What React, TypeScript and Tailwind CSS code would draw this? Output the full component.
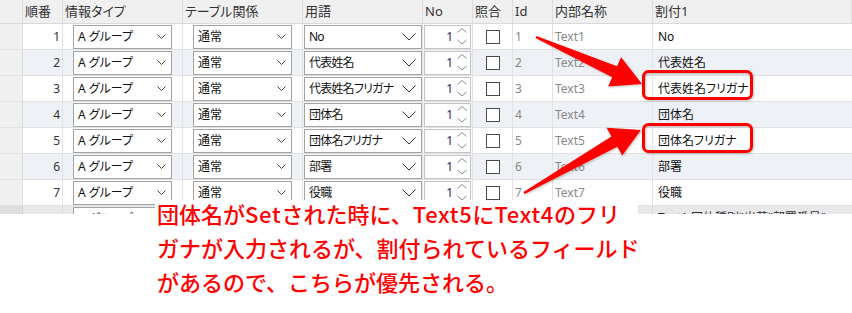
import React from "react";

type Row = { n: number; term: string; id: number; name: string; map: string };

const rows: Row[] = [
  { n: 1, term: "No", id: 1, name: "Text1", map: "No" },
  { n: 2, term: "代表姓名", id: 2, name: "Text2", map: "代表姓名" },
  { n: 3, term: "代表姓名フリガナ", id: 3, name: "Text3", map: "代表姓名フリガナ" },
  { n: 4, term: "団体名", id: 4, name: "Text4", map: "団体名" },
  { n: 5, term: "団体名フリガナ", id: 5, name: "Text5", map: "団体名フリガナ" },
  { n: 6, term: "部署", id: 6, name: "Text6", map: "部署" },
  { n: 7, term: "役職", id: 7, name: "Text7", map: "役職" },
];

const gridCols = "grid grid-cols-[23px_40px_120px_120px_120px_50px_40px_40px_100px_1fr]";

function SmallChevron() {
  return (
    <svg width="9" height="5" viewBox="0 0 9 5" className="shrink-0">
      <path d="M0.5 0.5 L4.5 4.5 L8.5 0.5" fill="none" stroke="#444" strokeWidth="1" />
    </svg>
  );
}

function BigChevron() {
  return (
    <svg width="14" height="8" viewBox="0 0 14 8" className="shrink-0">
      <path d="M0.5 0.5 L7 7 L13.5 0.5" fill="none" stroke="#333" strokeWidth="1" />
    </svg>
  );
}

function Select({ text, big, w }: { text: string; big?: boolean; w: string }) {
  return (
    <div className={`${w} h-[24px] bg-white border border-[#a3a3a3] flex items-center justify-between pl-[4px] pr-[5px]`}>
      <span className={`whitespace-nowrap text-[#111] ${big ? "tracking-[-0.8px]" : ""}`}>{text}</span>
      {big ? <BigChevron /> : <SmallChevron />}
    </div>
  );
}

function Spinner() {
  return (
    <div className="w-[47px] h-[24px] bg-white border border-[#c4c4c4] flex items-center justify-end pr-[3px] gap-[4px]">
      <span className="text-[#1f1f5a]">1</span>
      <svg width="10" height="17" viewBox="0 0 10 17">
        <path d="M0.5 4.5 L5 0.5 L9.5 4.5" fill="none" stroke="#8a8a8a" strokeWidth="1" />
        <path d="M0.5 12 L5 16 L9.5 12" fill="none" stroke="#8a8a8a" strokeWidth="1" />
      </svg>
    </div>
  );
}

const headers = ["", "順番", "情報タイプ", "テーブル関係", "用語", "No", "照合", "Id", "内部名称", "割付1"];

function L({ children }: { children: React.ReactNode }) {
  return <span className="tracking-[0.7px]">{children}</span>;
}

export default function App() {
  return (
    <div
      className="relative w-[852px] h-[313px] overflow-hidden bg-white text-[12px] [font-feature-settings:'palt']"
      style={{ fontFamily: '"Noto Sans", "Noto Sans CJK JP", sans-serif' }}
    >
      <div className="h-[214px] overflow-hidden">
        <div className={`${gridCols} h-[24px] bg-[#f0f0f0] border-b border-[#d9d9d9] text-[13px] text-[#333]`}>
          {headers.map((h, i) => (
            <div key={i} className="border-r border-[#dcdcdc] pl-[2px] flex items-center whitespace-nowrap">
              {h}
            </div>
          ))}
        </div>
        {rows.map((r, i) => (
          <div
            key={r.n}
            className={`${gridCols} h-[26px] border-b border-[#e1e1e1] ${i % 2 === 1 ? "bg-[#eef2f7]" : "bg-white"}`}
          >
            <div className="bg-[#f0f0f0] border-r border-[#dcdcdc]" />
            <div className="border-r border-[#e3e3e3] flex items-center justify-end pr-[2px] text-[#333]">{r.n}</div>
            <div className="border-r border-[#e3e3e3] flex items-center pl-[10px]">
              <Select text="A グループ" w="w-[99px]" />
            </div>
            <div className="border-r border-[#e3e3e3] flex items-center pl-[10px]">
              <Select text="通常" w="w-[99px]" />
            </div>
            <div className="border-r border-[#e3e3e3] flex items-center pl-[1px]">
              <Select text={r.term} big w="w-[119px]" />
            </div>
            <div className="border-r border-[#e3e3e3] flex items-center pl-[1px]">
              <Spinner />
            </div>
            <div className="border-r border-[#e3e3e3] flex items-center justify-center">
              <div className="w-[14px] h-[14px] border border-[#4a4a4a] bg-white" />
            </div>
            <div className="border-r border-[#e3e3e3] flex items-center pl-[2px] text-[#888]">{r.id}</div>
            <div className="border-r border-[#e3e3e3] flex items-center pl-[2px] text-[#888]">{r.name}</div>
            <div className="flex items-center pl-[5px] text-[#111] whitespace-nowrap">{r.map}</div>
          </div>
        ))}
        <div className={`${gridCols} h-[26px] bg-[#e8e8ea]`}>
          <div className="bg-[#dedede] border-r border-[#d0d0d0]" />
          <div className="border-r border-[#dadada]" />
          <div className="border-r border-[#dadada] pl-[10px] pt-[1px]">
            <Select text="A グループ" w="w-[99px]" />
          </div>
          <div className="border-r border-[#dadada] pl-[10px] pt-[1px]">
            <Select text="通常" w="w-[99px]" />
          </div>
          <div className="border-r border-[#dadada]" />
          <div className="border-r border-[#dadada]" />
          <div className="border-r border-[#dadada]" />
          <div className="border-r border-[#dadada]" />
          <div className="border-r border-[#dadada]" />
          <div className="pl-[5px] pt-[3px] text-[#333] whitespace-nowrap">Text1 団体種別"出荷"部署番号"</div>
        </div>
      </div>

      <svg className="absolute left-0 top-0 pointer-events-none" width="852" height="313" viewBox="0 0 852 313">
        <defs>
          <filter id="sh" x="-20%" y="-20%" width="140%" height="140%">
            <feDropShadow dx="1" dy="1" stdDeviation="1" floodColor="#000" floodOpacity="0.25" />
          </filter>
        </defs>
        <rect x="643.5" y="71.5" width="108" height="27" rx="5" fill="none" stroke="#f00" strokeWidth="3" filter="url(#sh)" />
        <rect x="643.5" y="124.5" width="108" height="27" rx="5" fill="none" stroke="#f00" strokeWidth="3" filter="url(#sh)" />
        <polygon
          points="536.4,36.1 617.0,66.3 621.1,57.2 642,84 608.1,86.4 612.2,77.3 535.6,37.9"
          fill="#f00"
          filter="url(#sh)"
        />
        <polygon
          points="523.5,192.1 611.4,136.4 606.6,127.7 641,130 622.2,155.5 617.3,146.7 524.5,193.9"
          fill="#f00"
          filter="url(#sh)"
        />
      </svg>

      <div className="absolute left-[155px] top-[200px] w-[483px] h-[14px] bg-white" />
      <div
        className="absolute left-[157px] top-[196px] text-[22px] leading-[34px] font-medium text-[#ff0000] whitespace-nowrap [font-feature-settings:normal]"
        style={{ fontFamily: '"Noto Sans CJK JP", sans-serif' }}
      >
        <div>
          団体名が<L>Set</L>された時に、<L>Text5</L>に<L>Text4</L>のフリ
        </div>
        <div>ガナが入力されるが、割付られているフィールド</div>
        <div>があるので、こちらが優先される。</div>
      </div>
    </div>
  );
}
